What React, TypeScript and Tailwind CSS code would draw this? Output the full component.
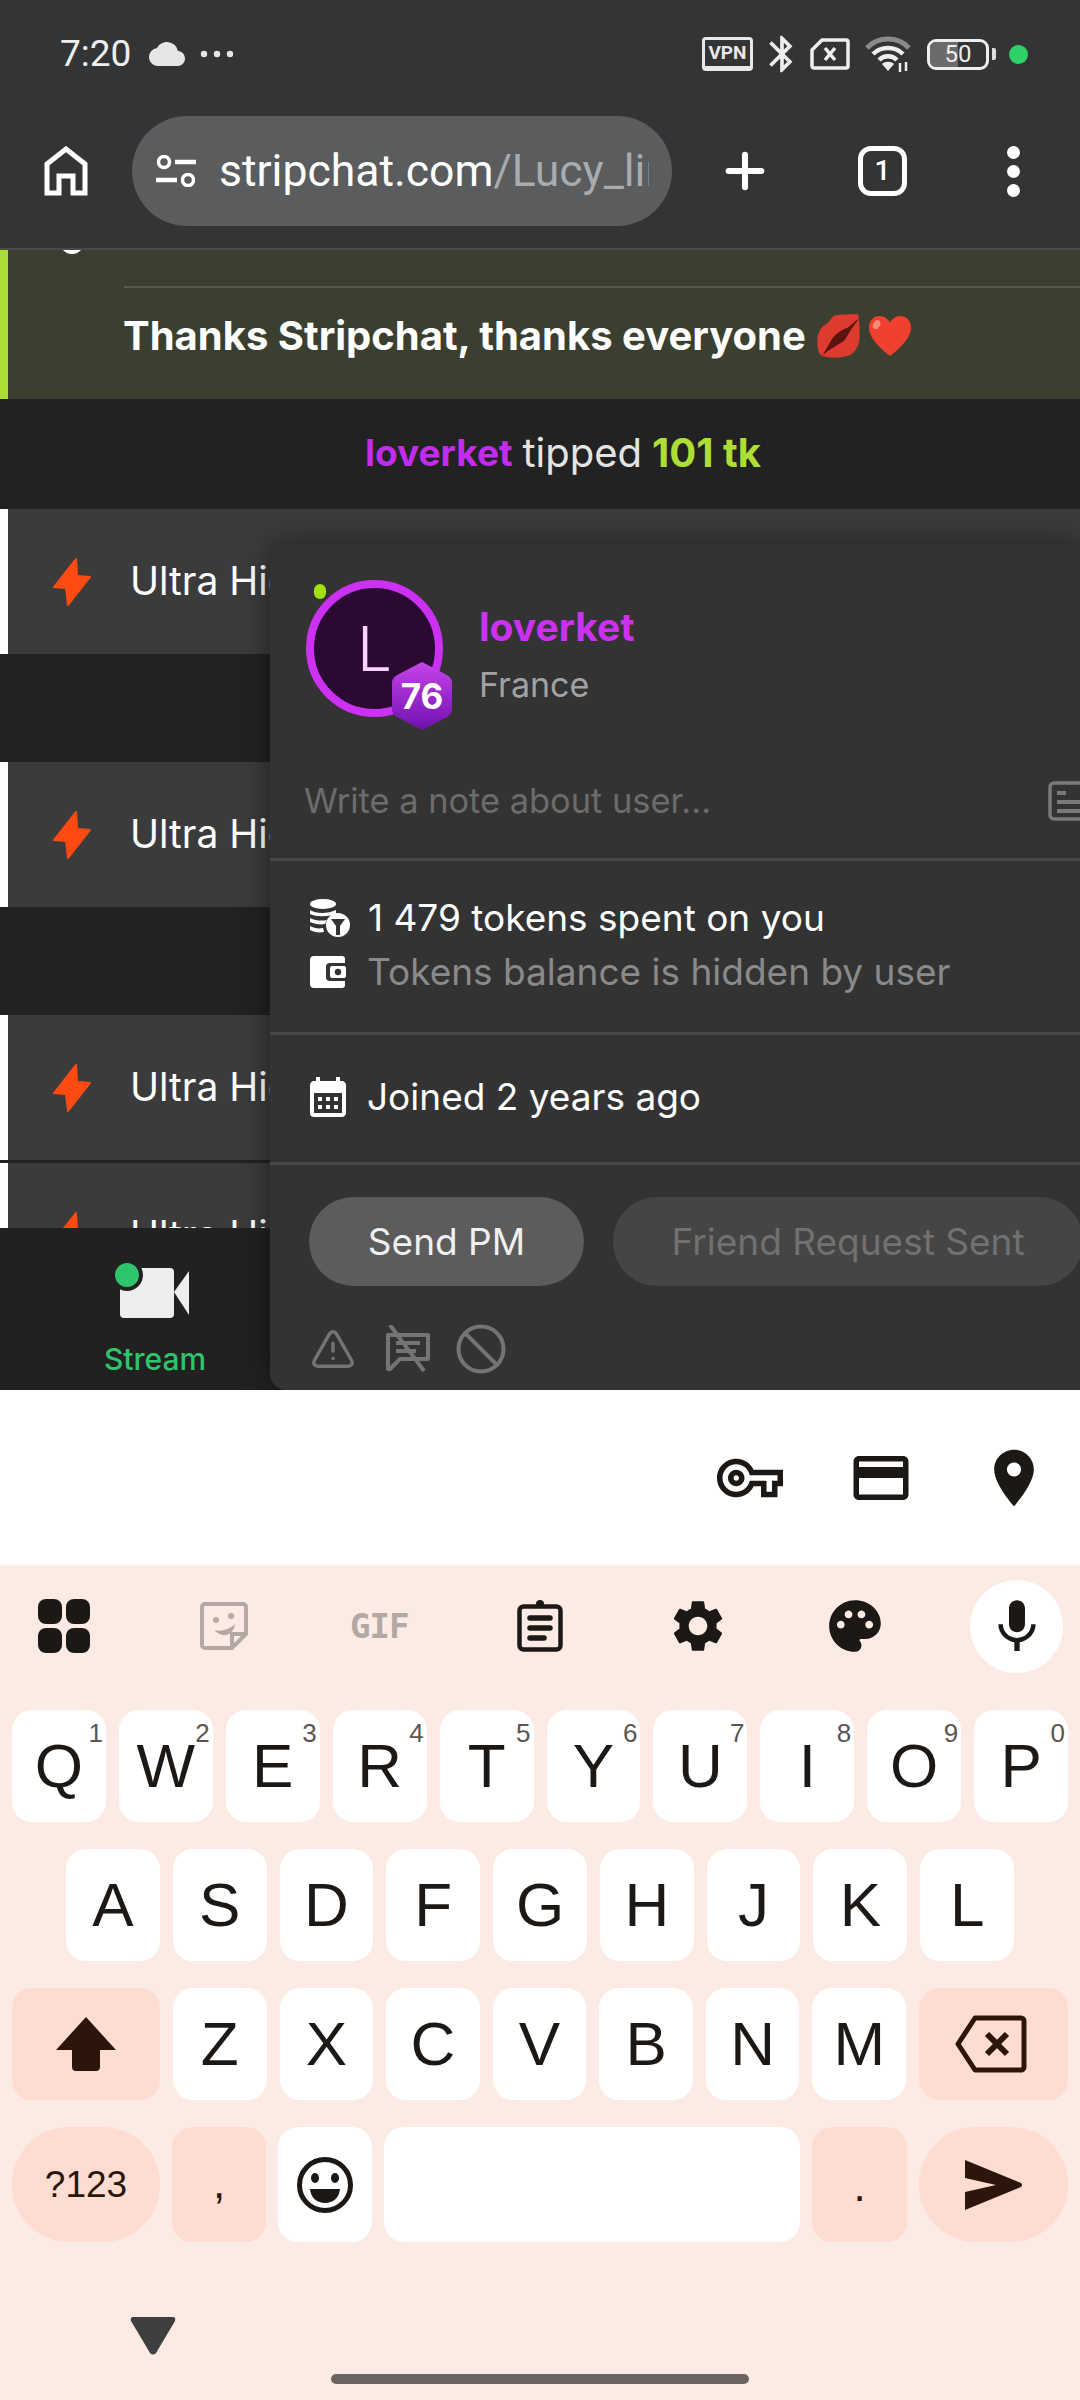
import React from "react";
import { MdBluetooth, MdCalendarMonth, MdCloud, MdOutlineCreditCard, MdMic, MdPalette, MdPlace, MdSettings, MdOutlineVpnKey } from "react-icons/md";
import { Ban, Plus, TriangleAlert } from "lucide-react";

const Bolt = () => (
  <svg viewBox="0 0 40 50" className="w-[40px] h-[50px] shrink-0 ml-[44px] mr-[38px]">
    <path d="M24 2 L2 30 L14 31 L16 48 L38 20 L25 19 Z" fill="#ff4a12" stroke="#ff4a12" strokeWidth="2" strokeLinejoin="round" />
  </svg>
);

const ChatRow = () => (
  <div className="h-[145px] shrink-0 flex items-center bg-[#3b3b3b] border-l-[8px] border-white text-white text-[39px] overflow-hidden">
    <Bolt />
    <span className="whitespace-nowrap">Ultra High</span>
  </div>
);
const Gap = () => <div className="h-[108px] shrink-0 bg-[#222222]" />;

const KEY = "relative flex items-center justify-center rounded-[20px] bg-white text-[#1c1816] text-[62px] h-[112px]";
const MOD = "flex items-center justify-center rounded-[20px] bg-[#ffdcd1] text-[#2c160c]";

const Key = ({ k, n }: { k: string; n?: string }) => (
  <div className={`${KEY} flex-1`}>
    <span className="leading-none">{k}</span>
    {n && <span className="absolute top-[10px] right-[3px] text-[26px] leading-none text-[#5b5552]">{n}</span>}
  </div>
);

const row1 = [["Q","1"],["W","2"],["E","3"],["R","4"],["T","5"],["Y","6"],["U","7"],["I","8"],["O","9"],["P","0"]];

export default function App() {
  return (
    <div className="relative w-[1080px] h-[2400px] flex flex-col overflow-hidden font-['Inter',sans-serif]">
      {/* Browser chrome */}
      <header className="h-[248px] shrink-0 bg-[#333436] text-white flex flex-col font-['Roboto',sans-serif]">
        <div className="h-[106px] flex items-center pl-[60px] pr-[52px] pt-[2px]">
          <span className="text-[37px] text-[#eeeeee] mr-[18px]">7:20</span>
          <MdCloud className="w-[36px] h-[36px] text-[#e6e6e6] mr-[15px]" />
          <svg viewBox="0 0 34 8" className="w-[34px] h-[8px]"><circle cx="4" cy="4" r="3.2" fill="#e6e6e6"/><circle cx="17" cy="4" r="3.2" fill="#e6e6e6"/><circle cx="30" cy="4" r="3.2" fill="#e6e6e6"/></svg>
          <div className="flex-1" />
          <div className="w-[51px] h-[34px] border-[3px] border-[#e8e8e8] rounded-[4px] border-b-[5px] flex items-center justify-center text-[19px] font-bold text-[#e8e8e8]">VPN</div>
          <MdBluetooth className="w-[44px] h-[44px] ml-[7px] text-[#eeeeee]" />
          <svg viewBox="0 0 40 32" className="w-[40px] h-[32px] ml-[6px]">
            <path d="M12 2 H36 a2 2 0 0 1 2 2 V28 a2 2 0 0 1 -2 2 H4 a2 2 0 0 1 -2 -2 V12 Z" fill="none" stroke="#eeeeee" strokeWidth="3.5" strokeLinejoin="round"/>
            <path d="M15 10 L25 22 M25 10 L15 22" stroke="#eeeeee" strokeWidth="3.5"/>
          </svg>
          <svg viewBox="0 0 46 36" className="w-[46px] h-[36px] ml-[15px]">
            <path d="M2 12 C13 0 33 0 44 12" fill="none" stroke="#8a8a8a" strokeWidth="5"/>
            <path d="M8 18 C16 10 30 10 38 18" fill="none" stroke="#eeeeee" strokeWidth="4.5"/>
            <path d="M14 24 C19 19 27 19 32 24" fill="none" stroke="#eeeeee" strokeWidth="4.5"/>
            <path d="M17 28 L23 35 L29 28 C26 25 20 25 17 28Z" fill="#eeeeee"/>
            <path d="M35 36 V27 M41 26 V35" stroke="#eeeeee" strokeWidth="2.5"/>
          </svg>
          <div className="w-[62px] h-[31px] ml-[16px] border-[3px] border-[#eeeeee] rounded-[9px] flex items-center relative overflow-hidden">
            <div className="absolute left-0 top-0 bottom-0 w-[28px] bg-[#6b6b6b]" />
            <span className="relative w-full text-center text-[24px] leading-none text-[#eeeeee]">50</span>
          </div>
          <div className="w-[4px] h-[12px] bg-[#dddddd] ml-[3px] rounded-r-[2px]" />
          <div className="w-[19px] h-[19px] rounded-full bg-[#2fd067] ml-[13px]" />
        </div>
        <div className="flex items-center h-[130px]">
          <svg viewBox="0 0 44 50" className="w-[44px] h-[50px] ml-[44px] mr-[44px] shrink-0" fill="none" stroke="#ffffff" strokeWidth="5" strokeLinejoin="miter">
            <path d="M3 47 V18 L22 3 L41 18 V47 H29 V30 H15 V47 Z" />
          </svg>
          <div className="w-[540px] h-[110px] rounded-[55px] bg-[#5a5c5e] flex items-center pl-[24px] shrink-0">
            <svg viewBox="0 0 40 32" className="w-[40px] h-[32px] shrink-0" fill="none" stroke="#ffffff" strokeWidth="3.5">
              <circle cx="8" cy="7" r="5.5"/><path d="M19 7 H40" strokeWidth="4.5"/>
              <circle cx="32" cy="25" r="5.5"/><path d="M0 25 H21" strokeWidth="4.5"/>
            </svg>
            <div className="w-[430px] ml-[23px] overflow-hidden whitespace-nowrap text-[44.5px] leading-[56px]">
              <span>stripchat.com</span><span className="text-[#a9abad]">/Lucy_lin</span>
            </div>
          </div>
          <Plus className="w-[56px] h-[56px] ml-[45px] shrink-0" strokeWidth={2.6} />
          <div className="w-[49px] h-[50px] ml-[85px] border-[5px] border-white rounded-[13px] flex items-center justify-center text-[28px] font-medium shrink-0">1</div>
          <div className="flex flex-col gap-[6px] ml-[100px] shrink-0">
            <div className="w-[13px] h-[13px] rounded-full bg-white" />
            <div className="w-[13px] h-[13px] rounded-full bg-white" />
            <div className="w-[13px] h-[13px] rounded-full bg-white" />
          </div>
        </div>
      </header>

      {/* Web page */}
      <main className="relative h-[1142px] shrink-0 flex flex-col bg-[#222222] border-t-[2px] border-[#484a4c] overflow-hidden">
        <div className="flex-1 min-h-0 overflow-hidden flex flex-col">
          <div className="relative h-[149px] shrink-0 overflow-hidden bg-[#3b3f30] border-l-[8px] border-[#aede35] pl-[115px] pt-[36px]">
            <div className="absolute left-[52px] -top-[20px] w-[24px] h-[24px] rounded-full bg-white" />
            <div className="h-[2px] ml-[1px] bg-[#55594a]" />
            <div className="flex items-center mt-[25px] text-[40px] leading-[46px] font-bold text-white whitespace-nowrap">
              <span>Thanks Stripchat, thanks everyone</span>
              <svg viewBox="0 0 125 130" className="w-[43px] h-[44px] ml-[11px] shrink-0">
                <path d="M120 0 C95 2 70 0 50 5 C40 10 38 22 28 28 C10 38 0 55 0 80 C0 100 2 118 15 124 C40 132 75 130 95 122 C115 112 125 90 125 65 C125 45 125 20 120 0 Z" fill="#dd3a30"/>
                <path d="M122 15 C105 25 95 40 85 42 C70 48 50 60 40 80 L15 122 C35 105 55 95 70 85 C85 78 90 60 100 45 Z" fill="#5b1410"/>
              </svg>
              <svg viewBox="0 0 46 44" className="w-[46px] h-[42px] ml-[7px] shrink-0">
                <path d="M23 43 C8 31 1 22 1 13 C1 6 6 1 12 1 C17 1 21 4 23 8 C25 4 29 1 34 1 C40 1 45 6 45 13 C45 22 38 31 23 43 Z" fill="#f04030"/>
                <ellipse cx="9" cy="10" rx="3.5" ry="5" transform="rotate(30 9 10)" fill="#f98a7c"/>
              </svg>
            </div>
          </div>
          <div className="h-[110px] shrink-0 bg-[#222222] flex items-center justify-center pl-[46px] pb-[2px] text-[40px] text-[#e4e4e4] gap-[10px]">
            <span className="text-[37px] font-bold text-[#c22cee]">loverket</span>
            <span>tipped</span>
            <span className="font-bold text-[#aede35]">101 tk</span>
          </div>
          <ChatRow /><Gap /><ChatRow /><Gap /><ChatRow />
          <div className="h-[3px] shrink-0" />
          <ChatRow />
        </div>
        <nav className="h-[162px] shrink-0 bg-[#212121] flex">
          <div className="w-[270px] flex flex-col items-center pt-[40px] pl-[40px]">
            <div className="relative w-[70px] h-[50px]">
              <svg viewBox="0 0 70 50" className="w-[70px] h-[50px]">
                <path d="M4 0 H50 a4 4 0 0 1 4 4 V46 a4 4 0 0 1 -4 4 H4 a4 4 0 0 1 -4 -4 V4 a4 4 0 0 1 4 -4 Z" fill="#eeeeee"/>
                <path d="M54 24 L69 3 V47 Z" fill="#eeeeee"/>
              </svg>
              <div className="absolute -left-[9px] -top-[9px] w-[32px] h-[32px] rounded-full bg-[#2fc46c] border-[4px] border-[#212121]" />
            </div>
            <span className="text-[30px] mt-[26px] leading-none text-[#2fc46c] font-medium">Stream</span>
          </div>
        </nav>

        {/* User popover */}
        <section className="absolute left-[270px] top-[294px] right-0 bottom-0 bg-[#333333] rounded-tl-[16px] rounded-bl-[16px] shadow-[0_0_30px_rgba(0,0,0,0.45)] overflow-hidden flex flex-col text-white text-[37px]">
          <div className="h-[217px] shrink-0 flex pl-[36px] pt-[36px]">
            <div className="relative w-[137px] h-[137px] shrink-0">
              <div className="w-full h-full rounded-full border-[8px] border-[#cc30f2] bg-[#2a0933] flex items-center justify-center text-[62px] font-light text-[#f8d4ff]">L</div>
              <div className="absolute left-[8px] top-[4px] w-[12px] h-[15px] rounded-full bg-[#a3e012]" />
              <div className="absolute left-[85px] top-[82px] w-[62px] h-[68px] flex items-center justify-center">
                <svg viewBox="0 0 62 68" className="absolute inset-0 w-[62px] h-[68px]">
                  <defs><linearGradient id="hx" x1="0" y1="0" x2="0" y2="1"><stop offset="0" stopColor="#c744ea"/><stop offset="1" stopColor="#6f10b0"/></linearGradient></defs>
                  <path d="M31 0 L56 13 Q61 16 61 21 V47 Q61 52 56 55 L31 68 L6 55 Q1 52 1 47 V21 Q1 16 6 13 Z" fill="url(#hx)"/>
                </svg>
                <span className="relative text-[35px] font-bold leading-none">76</span>
              </div>
            </div>
            <div className="ml-[36px] flex flex-col">
              <span className="text-[39px] leading-[46px] font-bold text-[#cc30f0] mt-[24px]">loverket</span>
              <span className="text-[34px] leading-[40px] text-[#a2a2a2] mt-[15px]">France</span>
            </div>
          </div>
          <div className="h-[100px] shrink-0 flex items-center justify-between pl-[34px] border-b-[3px] border-[#484848] pb-[18px]">
            <span className="text-[34.4px] text-[#6c6c6c]">Write a note about user...</span>
            <svg viewBox="0 0 40 40" className="w-[40px] h-[40px] -mr-[2px] translate-x-[6px]" fill="none" stroke="#7a7a7a">
              <rect x="2" y="2" width="36" height="36" rx="4" strokeWidth="3.5"/>
              <path d="M9 12 H18 M9 21 H32 M9 30 H32" strokeWidth="4"/>
            </svg>
          </div>
          <div className="h-[174px] shrink-0 border-b-[3px] border-[#484848] pl-[40px] pt-[30px]">
            <div className="flex items-center h-[54px]">
              <svg viewBox="0 0 40 38" className="w-[40px] h-[38px] shrink-0">
                <ellipse cx="13" cy="5" rx="13" ry="5" fill="#ffffff"/>
                <path d="M0 11 C6 15 18 15 26 11 V15 C18 18 6 18 0 15Z M0 19 C6 22 12 22 17 21 L15 25 C10 26 5 25 0 23Z M0 27 C4 29 8 30 13 29 L14 33 C8 34 4 33 0 31Z" fill="#ffffff"/>
                <circle cx="28" cy="26" r="12" fill="#ffffff"/>
                <path d="M21 20 H35 L30 27 V36 H26 V27 Z" fill="#333333"/>
              </svg>
              <span className="ml-[18px] whitespace-nowrap">1 479 tokens spent on you</span>
            </div>
            <div className="flex items-center h-[54px]">
              <svg viewBox="0 0 36 32" className="w-[36px] h-[32px] shrink-0">
                <path d="M4 0 H32 a3 3 0 0 1 3 3 V7 H20 a4 4 0 0 0 -4 4 V21 a4 4 0 0 0 4 4 H35 V29 a3 3 0 0 1 -3 3 H4 a4 4 0 0 1 -4 -4 V4 a4 4 0 0 1 4 -4 Z" fill="#ffffff"/>
                <rect x="20" y="10" width="16" height="12" rx="2" fill="#ffffff"/>
                <circle cx="28" cy="16" r="3.2" fill="#333333"/>
              </svg>
              <span className="ml-[21px] whitespace-nowrap text-[#8a8a8a]">Tokens balance is hidden by user</span>
            </div>
          </div>
          <div className="h-[130px] shrink-0 border-b-[3px] border-[#484848] flex items-center pl-[34px] pb-[4px]">
            <MdCalendarMonth className="w-[48px] h-[48px] shrink-0 text-white" />
            <span className="ml-[15px]">Joined 2 years ago</span>
          </div>
          <div className="flex gap-[29px] pl-[39px] pt-[32px] shrink-0">
            <div className="w-[275px] h-[89px] shrink-0 rounded-full bg-[#5c5c5c] flex items-center justify-center text-[#f0f0f0]">Send PM</div>
            <div className="w-[470px] h-[89px] shrink-0 rounded-[44px] bg-[#454545] flex items-center justify-center text-[#717171] whitespace-nowrap">Friend Request Sent</div>
          </div>
          <div className="flex items-center pl-[40px] pt-[36px] text-[#747474]">
            <TriangleAlert className="w-[46px] h-[46px]" strokeWidth={1.8} />
            <svg viewBox="0 0 48 48" className="w-[48px] h-[48px] ml-[28px]" fill="none" stroke="#747474" strokeWidth="4">
              <path d="M4 10 H44 V34 H16 L6 44 H4 Z" strokeLinejoin="round"/>
              <path d="M12 18 H36 M12 26 H32" />
              <path d="M6 0 L40 46" />
            </svg>
            <Ban className="w-[54px] h-[54px] ml-[22px]" strokeWidth={1.8} />
          </div>
        </section>
      </main>

      {/* Autofill strip */}
      <div className="h-[176px] shrink-0 bg-white flex items-center justify-end border-b-[2px] border-[#f6f6f4] text-[#1c1816] pr-[32px] pt-[2px]">
        <MdOutlineVpnKey className="w-[66px] h-[66px]" />
        <MdOutlineCreditCard className="w-[66px] h-[66px] ml-[65px]" />
        <MdPlace className="w-[68px] h-[68px] ml-[66px]" />
      </div>

      {/* Keyboard */}
      <div className="flex-1 bg-[#fceae4] flex flex-col font-['Liberation_Sans',sans-serif]">
        <div className="h-[144px] shrink-0 flex items-center pb-[24px] text-[#1c1816] relative">
          <svg viewBox="0 0 52 54" className="w-[52px] h-[54px] ml-[38px] shrink-0" fill="#1c1816">
            <rect x="0" y="0" width="24" height="25" rx="8"/><rect x="28" y="0" width="24" height="25" rx="8"/>
            <rect x="0" y="29" width="24" height="25" rx="8"/><rect x="28" y="29" width="24" height="25" rx="8"/>
          </svg>
          <svg viewBox="0 0 48 48" className="w-[48px] h-[48px] ml-[110px] shrink-0">
            <path d="M5 2 H43 a3 3 0 0 1 3 3 V32 L32 46 H5 a3 3 0 0 1 -3 -3 V5 a3 3 0 0 1 3 -3Z" fill="none" stroke="#b3a8a3" strokeWidth="4"/>
            <path d="M32 46 V32 H46" fill="none" stroke="#b3a8a3" strokeWidth="4"/>
            <circle cx="16" cy="18" r="3" fill="#b3a8a3"/><circle cx="31" cy="14" r="3" fill="#b3a8a3"/>
            <path d="M14 28 C22 30 30 27 35 22 C34 32 24 38 14 28Z" fill="#b3a8a3"/>
          </svg>
          <span className="ml-[102px] w-[64px] text-[34px] leading-none font-bold text-[#b3a8a3] font-['DejaVu_Sans_Mono',monospace] tracking-[-1px] shrink-0">GIF</span>
          <svg viewBox="0 0 46 52" className="w-[46px] h-[52px] ml-[103px] shrink-0" fill="none" stroke="#1c1816">
            <rect x="2.5" y="6.5" width="41" height="43" rx="4" strokeWidth="4.5"/>
            <circle cx="23" cy="4" r="4" fill="#1c1816" stroke="none"/>
            <path d="M13 18 H33 M13 28 H33 M13 38 H27" strokeWidth="5.5" strokeLinecap="round"/>
          </svg>
          <MdSettings className="w-[62px] h-[62px] ml-[104px] shrink-0" />
          <MdPalette className="w-[62px] h-[62px] ml-[95px] shrink-0" />
          <div className="absolute left-[970px] top-[14px] w-[93px] h-[93px] rounded-full bg-white flex items-center justify-center">
            <MdMic className="w-[64px] h-[64px]" />
          </div>
        </div>

        <div className="flex flex-col gap-[27px] px-[12px]">
          <div className="flex gap-[13px]">
            {row1.map(([k, n]) => <Key key={k} k={k} n={n} />)}
          </div>
          <div className="flex gap-[13px] px-[54px]">
            {"ASDFGHJKL".split("").map((k) => <Key key={k} k={k} />)}
          </div>
          <div className="flex gap-[13px]">
            <div className={`${MOD} w-[148px] h-[112px] shrink-0`}>
              <svg viewBox="0 0 60 54" className="w-[60px] h-[54px]"><path d="M30 0 L60 33 H44 V50 a4 4 0 0 1 -4 4 H20 a4 4 0 0 1 -4 -4 V33 H0 Z" fill="#2c160c"/></svg>
            </div>
            {"ZXCVBNM".split("").map((k) => <Key key={k} k={k} />)}
            <div className={`${MOD} w-[149px] h-[112px] shrink-0 pr-[6px]`}>
              <svg viewBox="0 0 72 58" className="w-[72px] h-[58px]" fill="none" stroke="#2c160c" strokeWidth="5">
                <path d="M20 3 H66 a3 3 0 0 1 3 3 V52 a3 3 0 0 1 -3 3 H20 L3 29 Z" strokeLinejoin="round"/>
                <path d="M32 19 L52 39 M52 19 L32 39" strokeWidth="6"/>
              </svg>
            </div>
          </div>
          <div className="flex gap-[12px] h-[115px]">
            <div className={`${MOD} w-[148px] !rounded-[57px] text-[37px]`}>?123</div>
            <div className={`${MOD} w-[94px] text-[44px] items-end pb-[26px]`}>,</div>
            <div className="w-[94px] rounded-[20px] bg-white flex items-center justify-center">
              <svg viewBox="0 0 56 56" className="w-[56px] h-[56px]">
                <circle cx="28" cy="28" r="25.5" fill="none" stroke="#1c1816" strokeWidth="5"/>
                <ellipse cx="18" cy="21" rx="4" ry="5" fill="#1c1816"/><ellipse cx="38" cy="21" rx="4" ry="5" fill="#1c1816"/>
                <path d="M13 32 H43 C42 41 36 46 28 46 C20 46 14 41 13 32 Z" fill="#1c1816"/>
              </svg>
            </div>
            <div className="flex-1 rounded-[20px] bg-white" />
            <div className={`${MOD} w-[95px] text-[44px] items-end pb-[23px]`}>.</div>
            <div className={`${MOD} w-[149px] !rounded-[57px]`}>
              <svg viewBox="0 0 58 50" className="w-[58px] h-[50px]"><path d="M0 0 L56 23 Q58 25 56 27 L0 50 V32 L31 25 L0 18 Z" fill="#2c160c"/></svg>
            </div>
          </div>
        </div>

        <div className="relative flex-1">
          <svg viewBox="0 0 46 38" className="absolute left-[130px] top-[75px] w-[46px] h-[38px]"><path d="M3 0 H43 Q46 0 45 4 L26 36 Q23 39 20 36 L1 4 Q0 0 3 0 Z" fill="#3f3f3f"/></svg>
          <div className="absolute left-[331px] top-[132px] w-[418px] h-[10px] rounded-full bg-[#6b6461]" />
        </div>
      </div>
    </div>
  );
}
